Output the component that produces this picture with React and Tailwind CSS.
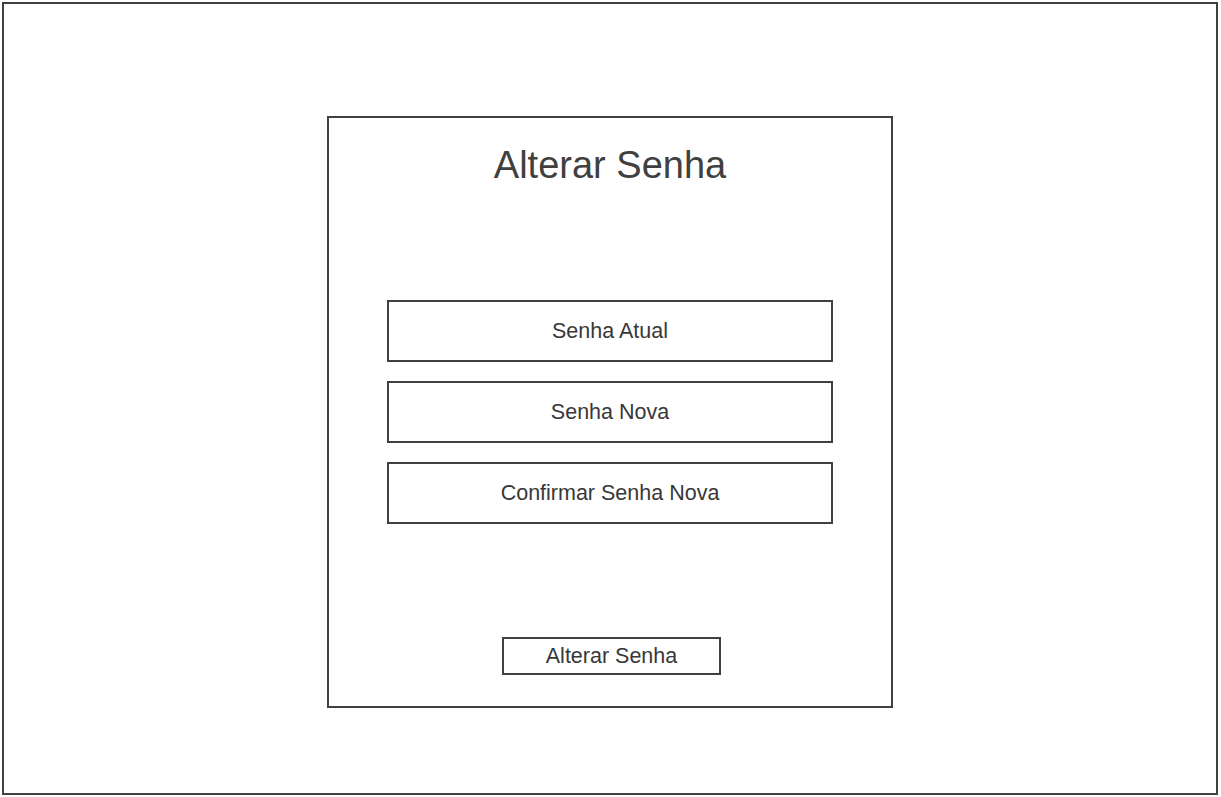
import { useState } from 'react'

const fields = [
  { name: 'atual', label: 'Senha Atual' },
  { name: 'nova', label: 'Senha Nova' },
  { name: 'confirmar', label: 'Confirmar Senha Nova' },
]

function App() {
  const [values, setValues] = useState({ atual: '', nova: '', confirmar: '' })

  const handleChange = (e) => {
    setValues((prev) => ({ ...prev, [e.target.name]: e.target.value }))
  }

  return (
    <div className="min-h-[797px] bg-white font-['Liberation_Sans',Arial,sans-serif] text-[#404040]">
      <div className="ml-[2px] mt-[2px] flex h-[793px] w-[1216px] flex-col items-center border-2 border-[#404040] pt-[112px]">
        <form
          className="flex h-[592px] w-[566px] flex-col items-center border-2 border-[#404040]"
          onSubmit={(e) => e.preventDefault()}
        >
          <h1 className="mt-[28px] text-[38px] leading-[38px] font-normal">Alterar Senha</h1>

          <div className="mt-[116px] flex flex-col gap-[19px]">
            {fields.map((field) => (
              <input
                key={field.name}
                type="password"
                name={field.name}
                value={values[field.name]}
                onChange={handleChange}
                placeholder={field.label}
                className="h-[62px] w-[446px] border-2 border-[#404040] bg-white text-center text-[21.5px] text-[#383838] outline-none placeholder:text-[#383838]"
              />
            ))}
          </div>

          <button
            type="submit"
            className="mt-[113px] ml-[3px] flex h-[38px] w-[219px] items-center justify-center border-2 border-[#404040] bg-white pt-[2px] text-[21.5px] leading-none text-[#383838]"
          >
            Alterar Senha
          </button>
        </form>
      </div>
    </div>
  )
}

export default App
